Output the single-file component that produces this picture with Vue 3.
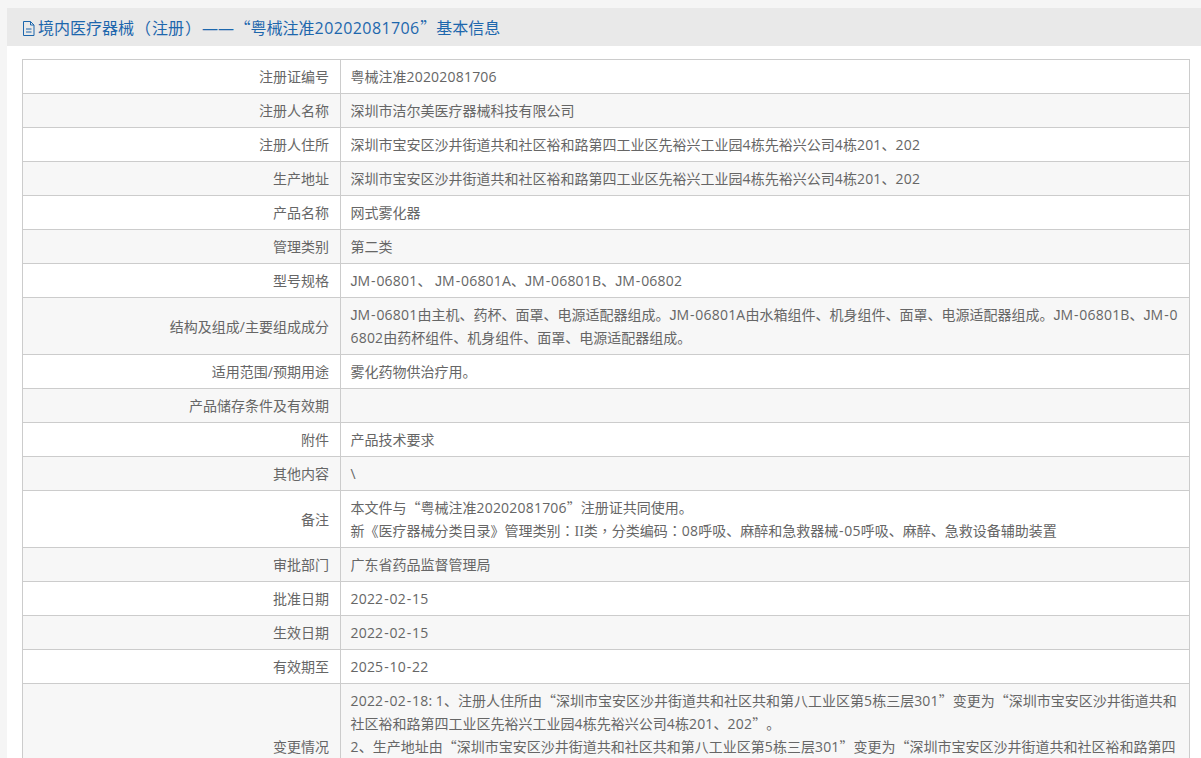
<template>
  <div class="page">
    <div class="panel">
      <h3 class="title">
        <svg class="doc-icon" viewBox="0 0 12 15" width="12" height="15" aria-hidden="true">
          <path d="M0.500 0.500h7l3.500 3.500v10.500h-10.500z M7.500 0.500v3.500h3.500 M3 8h5.500 M3 11h5.500" />
        </svg>
        <span v-for="(run, i) in splitRuns(title)" :key="i" :class="run.cls">{{ run.text }}</span>
      </h3>
      <table class="info">
        <tbody>
          <tr v-for="row in rows" :key="row.label">
            <td class="label">{{ row.label }}</td>
            <td class="value">
              <div v-for="line in row.lines" :key="line">
                <span v-for="(run, i) in splitRuns(line)" :key="i" :class="run.cls">{{ run.text }}</span>
              </div>
            </td>
          </tr>
        </tbody>
      </table>
    </div>
  </div>
</template>

<script setup>
const title = '境内医疗器械（注册）——“粤械注准20202081706”基本信息'
const address = '深圳市宝安区沙井街道共和社区裕和路第四工业区先裕兴工业园4栋先裕兴公司4栋201、202'

const rows = [
  { label: '注册证编号', lines: ['粤械注准20202081706'] },
  { label: '注册人名称', lines: ['深圳市洁尔美医疗器械科技有限公司'] },
  { label: '注册人住所', lines: [address] },
  { label: '生产地址', lines: [address] },
  { label: '产品名称', lines: ['网式雾化器'] },
  { label: '管理类别', lines: ['第二类'] },
  { label: '型号规格', lines: ['JM-06801、 JM-06801A、JM-06801B、JM-06802'] },
  {
    label: '结构及组成/主要组成成分',
    lines: ['JM-06801由主机、药杯、面罩、电源适配器组成。JM-06801A由水箱组件、机身组件、面罩、电源适配器组成。JM-06801B、JM-06802由药杯组件、机身组件、面罩、电源适配器组成。']
  },
  { label: '适用范围/预期用途', lines: ['雾化药物供治疗用。'] },
  { label: '产品储存条件及有效期', lines: ['\u00a0'] },
  { label: '附件', lines: ['产品技术要求'] },
  { label: '其他内容', lines: ['\\'] },
  {
    label: '备注',
    lines: [
      '本文件与“粤械注准20202081706”注册证共同使用。',
      '新《医疗器械分类目录》管理类别：II类，分类编码：08呼吸、麻醉和急救器械-05呼吸、麻醉、急救设备辅助装置'
    ]
  },
  { label: '审批部门', lines: ['广东省药品监督管理局'] },
  { label: '批准日期', lines: ['2022-02-15'] },
  { label: '生效日期', lines: ['2022-02-15'] },
  { label: '有效期至', lines: ['2025-10-22'] },
  {
    label: '变更情况',
    lines: [
      '2022-02-18: 1、注册人住所由“深圳市宝安区沙井街道共和社区共和第八工业区第5栋三层301”变更为“深圳市宝安区沙井街道共和社区裕和路第四工业区先裕兴工业园4栋先裕兴公司4栋201、202”。',
      '2、生产地址由“深圳市宝安区沙井街道共和社区共和第八工业区第5栋三层301”变更为“深圳市宝安区沙井街道共和社区裕和路第四工业区先裕兴工业园4栋先裕兴公司4栋201、202”。'
    ]
  }
]

// the reference's font is wider on J and the hyphen, and its quotes and punctuation sit differently
function runClass(part) {
  if (part === 'II') return 'roman'
  if (part === 'J') return 'wide-j'
  if (part === '-') return 'hyphen'
  if (/^[“”]$/.test(part)) return 'quote'
  if (/^[，：（）]$/.test(part)) return 'centered'
  if (/^[A-Za-z0-9]+$/.test(part)) return 'latin'
  return ''
}

function splitRuns(text) {
  return text
    .split(/(II|J|-|[“”]|[，：（）]|[A-Za-z0-9]+)/)
    .filter(Boolean)
    .map((part) => ({ text: part, cls: runClass(part) }))
}
</script>

<style>
html,
body {
  margin: 0;
  height: 758px;
  overflow: hidden;
  background: #f5f5f5;
}
</style>

<style scoped>
.page {
  padding: 8px 0 0 7px;
  height: 750px;
  overflow: hidden;
  font-family: "Open Sans", "Noto Sans CJK SC", sans-serif;
  font-size: 14px;
  color: #666;
  text-spacing-trim: space-all;
}
.panel {
  background: #fff;
  padding-bottom: 20px;
}
.title {
  margin: 0;
  height: 38px;
  padding-left: 16px;
  background: #e9e9e9;
  color: #1d67ad;
  font-size: 16px;
  font-weight: normal;
  line-height: 38px;
  white-space: nowrap;
}
.title .centered {
  margin: 0 1px;
}
.title .latin {
  letter-spacing: 0.4px;
}
.title .quote {
  margin-left: 0.500px;
}
.doc-icon {
  vertical-align: -2px;
  margin-right: 3px;
}
.doc-icon path {
  fill: none;
  stroke: #1d67ad;
  stroke-width: 1;
}
.info {
  width: 1168px;
  margin: 13px 0 0 15px;
  border-collapse: collapse;
  table-layout: fixed;
  line-height: 23px;
  word-break: break-all;
}
.info tr:nth-child(even) td {
  background: #f7f7f7;
}
.info td {
  border: 1px solid #ccc;
}
.info td.label {
  width: 296px;
  padding: 5px 11px 5px 10px;
  text-align: right;
}
.info td.value {
  padding: 5px 11px 5px 9.500px;
}
/* the change log runs past the bottom of the window, five lines tall */
.info tr:last-child td {
  height: 115px;
}
.info tr:last-child td.value {
  vertical-align: top;
}
.quote {
  font-family: "Noto Sans CJK SC", sans-serif;
}
.centered {
  font-family: "Noto Sans CJK TC", sans-serif;
}
.roman {
  font-family: "Liberation Serif", serif;
  line-height: 1;
}
.latin {
  letter-spacing: 0.2px;
}
.wide-j {
  font-family: "Liberation Sans", sans-serif;
  line-height: 1;
}
.hyphen {
  margin: 0 0.800px;
}
</style>
